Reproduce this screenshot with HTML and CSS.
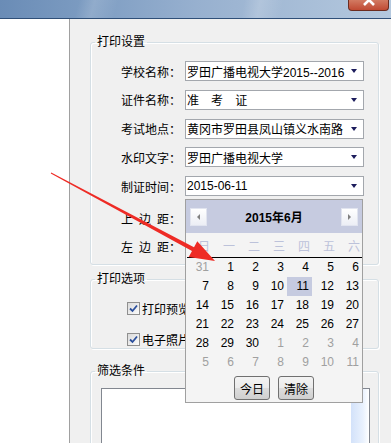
FILE: index.html
```html
<!DOCTYPE html>
<html lang="zh-CN">
<head>
  <meta charset="UTF-8">
  <meta name="viewport" content="width=device-width, initial-scale=1">
  <title>打印设置</title>
  <link rel="stylesheet" href="styles.css">
</head>
<body>

<div class="titlebar">
  <div class="close-btn">
    <svg width="14" height="7" viewBox="0 0 14 7"><path d="M2 -5 L12 5 M12 -5 L2 5" stroke="#fff" stroke-width="2.6" fill="none"/></svg>
  </div>
</div>

<div class="main">
  <div class="side"></div>

  <div class="panel">
    <fieldset class="group">
      <legend>打印设置</legend>
      <div class="group-body print-body">
        <div class="row">
          <span class="label">学校名称：</span>
          <div class="combo"><span class="combo-text">罗田广播电视大学2015--2016</span><span class="combo-arrow"></span></div>
        </div>
        <div class="row">
          <span class="label">证件名称：</span>
          <div class="combo"><span class="combo-text spaced">准  考  证</span><span class="combo-arrow"></span></div>
        </div>
        <div class="row">
          <span class="label">考试地点：</span>
          <div class="combo"><span class="combo-text">黄冈市罗田县凤山镇义水南路</span><span class="combo-arrow"></span></div>
        </div>
        <div class="row">
          <span class="label">水印文字：</span>
          <div class="combo"><span class="combo-text">罗田广播电视大学</span><span class="combo-arrow"></span></div>
        </div>
        <div class="row">
          <span class="label">制证时间：</span>
          <div class="combo combo-date">
            <span class="combo-text">2015-06-11</span><span class="combo-arrow"></span>

            <!-- 日期下拉 -->
            <div class="calendar">
              <div class="cal-head">
                <span class="cal-nav"><i class="tri-left"></i></span>
                <span class="cal-title">2015年6月</span>
                <span class="cal-nav"><i class="tri-right"></i></span>
              </div>
              <div class="cal-week">
                <span>日</span><span>一</span><span>二</span><span>三</span><span>四</span><span>五</span><span>六</span>
              </div>
              <div class="cal-days" id="calDays"></div>
              <div class="cal-foot">
                <button class="cal-btn">今日</button>
                <button class="cal-btn">清除</button>
              </div>
            </div>
          </div>
        </div>
        <div class="row row-spin">
          <span class="label spaced">上 边 距：</span>
        </div>
        <div class="row row-spin">
          <span class="label spaced">左 边 距：</span>
        </div>
      </div>
    </fieldset>

    <fieldset class="group group-options">
      <legend>打印选项</legend>
      <div class="group-body options-body">
        <div class="check-row"><span class="checkbox"><svg width="9" height="9" viewBox="0 0 9 9"><path d="M1 4.5 L3.5 7 L8 1.5" stroke="#2b4f9c" stroke-width="1.8" fill="none"/></svg></span>打印预览</div>
        <div class="check-row"><span class="checkbox"><svg width="9" height="9" viewBox="0 0 9 9"><path d="M1 4.5 L3.5 7 L8 1.5" stroke="#2b4f9c" stroke-width="1.8" fill="none"/></svg></span>电子照片</div>
      </div>
    </fieldset>

    <fieldset class="group group-filter">
      <legend>筛选条件</legend>
      <div class="group-body filter-body">
        <div class="list"><div class="list-strip"></div></div>
      </div>
    </fieldset>
  </div>
</div>

<svg class="pointer" width="391" height="443" viewBox="0 0 391 443">
  <polygon points="50.8,173.4 51.2,172.6 194,247.3 197.3,241.3 215,261 188.7,257.1 192,251.1" fill="#ee2b25"/>
</svg>

<script>
  // 2015年6月，前后补上月和下月的日期
  const days = [];
  days.push({ d: 31, other: true });
  for (let i = 1; i <= 30; i++) days.push({ d: i });
  for (let i = 1; days.length < 42; i++) days.push({ d: i, other: true });

  document.getElementById("calDays").innerHTML = days.map(day => {
    let cls = day.other ? 'other' : '';
    if (!day.other && day.d === 11) cls = 'today';
    return `<span class="${cls}">${day.d}</span>`;
  }).join('');
</script>

</body>
</html>
```

FILE: styles.css
```css
/* 基本样式 */
body {
  margin: 0;
  height: 443px;
  overflow: hidden;
  font-family: "Liberation Sans", "Noto Sans CJK SC", sans-serif;
  font-size: 12px;
  color: #000;
  background: #f0f0f0;
}

/* 标题栏 */
.titlebar {
  height: 18px;
  padding-right: 2px;
  display: flex;
  justify-content: flex-end;
  border-bottom: 1px solid #2f4f78;
  background:
    linear-gradient(105deg, rgba(255,255,255,0) 20%, rgba(255,255,255,0.15) 24%, rgba(255,255,255,0) 30%),
    linear-gradient(100deg, rgba(255,255,255,0) 62%, rgba(255,255,255,0.18) 66%, rgba(255,255,255,0) 72%),
    linear-gradient(90deg, #6a8cb6 0%, #7f9ec3 25%, #97b0cf 50%, #a3bad5 70%, #b4c8de 100%);
}

.close-btn {
  width: 39px;
  height: 10px;
  display: flex;
  justify-content: center;
  border: 1px solid #6b2c20;
  border-top: none;
  border-radius: 0 0 4px 4px;
  background: linear-gradient(#d27a62, #c04a33);
}

.main {
  display: flex;
  height: 424px;
}

.side {
  width: 69px;
  background: #fff;
  border-right: 1px solid #a0a0a0;
}

.panel {
  flex: 1;
  padding: 16px 12px 0 20px;
  overflow: hidden;
}

/* 分组框 */
.group {
  margin: 0;
  padding: 0;
  min-width: 0;
  border: 1px solid #d5dfe5;
  border-radius: 3px;
  box-shadow: inset 1px 1px #fff, 1px 1px #fff;
}

.group legend {
  margin-left: 4px;
  padding: 0 2px;
  line-height: 14px;
}

.print-body {
  padding: 12px 0 8px;
}

.row {
  display: flex;
  align-items: center;
  height: 20px;
}

.row + .row {
  margin-top: 8.75px;
}

.row.row-spin {
  margin-top: 12px;
}

.row.row-spin + .row-spin {
  margin-top: 8px;
}

.label {
  width: 90px;
  margin-right: 4px;
  text-align: right;
  white-space: pre;
}

.spaced {
  word-spacing: 2.7px;
}

.combo {
  position: relative;
  width: 177px;
  height: 18px;
  display: flex;
  align-items: center;
  border: 1px solid #a3a7ad;
  background: #fff;
}

.combo-text {
  flex: 1;
  padding-left: 1px;
  white-space: pre;
  overflow: hidden;
}

.combo-arrow {
  width: 0;
  height: 0;
  margin-right: 6px;
  border-left: 3.5px solid transparent;
  border-right: 3.5px solid transparent;
  border-top: 4px solid #1c1c5c;
}

/* 日历下拉 */
.calendar {
  position: absolute;
  left: -1px;
  top: 22px;
  width: 176px;
  z-index: 2;
  border: 1px solid #a0a0a0;
  background: #f4f4f4;
}

.cal-head {
  height: 33px;
  padding: 0 4px;
  display: flex;
  align-items: center;
  justify-content: space-between;
  background: #c6cbe0;
}

.cal-nav {
  width: 15px;
  height: 16px;
  display: flex;
  align-items: center;
  justify-content: center;
  border: 1px solid #e1e4ef;
  background: linear-gradient(#ffffff, #eceef5);
}

.tri-left, .tri-right {
  width: 0;
  height: 0;
  border-top: 3.5px solid transparent;
  border-bottom: 3.5px solid transparent;
}

.tri-left {
  border-right: 3px solid #808080;
}

.tri-right {
  border-left: 3px solid #808080;
}

.cal-title {
  font-weight: bold;
}

.cal-week, .cal-days {
  display: grid;
  grid-template-columns: repeat(7, 25px);
  margin-left: 1px;
}

.cal-week {
  height: 24px;
  align-items: center;
  border-bottom: 1px solid #000;
  color: #bcc2da;
  font-family: "Noto Sans CJK SC", sans-serif;
}

.cal-week span {
  text-align: right;
  padding-right: 2px;
}

.cal-days {
  grid-auto-rows: 19px;
}

.cal-days span {
  text-align: right;
  padding-right: 3px;
  line-height: 19px;
}

.cal-days .other {
  color: #a0a0a0;
}

.cal-days .today {
  background: #c6cbe0;
}

.cal-foot {
  display: flex;
  justify-content: center;
  gap: 8px;
  padding: 4px 0 2px;
}

.cal-btn {
  width: 36px;
  height: 24px;
  padding: 0;
  font: inherit;
  color: #000;
  border: 1px solid #707070;
  border-radius: 3px;
  background: linear-gradient(#f3f3f3 0%, #ebebeb 50%, #dddddd 51%, #cfcfcf 100%);
}

/* 打印选项 */
.group-options {
  margin-top: 7px;
}

.options-body {
  padding: 15px 0 2px 36px;
}

.check-row {
  display: flex;
  align-items: center;
  gap: 2px;
  height: 14px;
}

.check-row + .check-row {
  margin-top: 17px;
}

.checkbox {
  width: 11px;
  height: 11px;
  display: flex;
  align-items: center;
  justify-content: center;
  border: 1px solid #8f8f8f;
  background: linear-gradient(135deg, #dadada, #fbfbfb);
}

/* 筛选条件 */
.group-filter {
  margin-top: 15px;
}

.filter-body {
  padding: 10px 8px 0 10px;
}

.list {
  height: 80px;
  display: flex;
  justify-content: flex-end;
  border: 1px solid #828790;
  background: #fff;
}

.list-strip {
  width: 17px;
  margin-right: 1px;
  background: linear-gradient(90deg, #d3e2fa, #e9f1fd 70%, #fbfdff);
}

/* 红色箭头 */
.pointer {
  position: absolute;
  left: 0;
  top: 0;
  z-index: 3;
  pointer-events: none;
}
```
